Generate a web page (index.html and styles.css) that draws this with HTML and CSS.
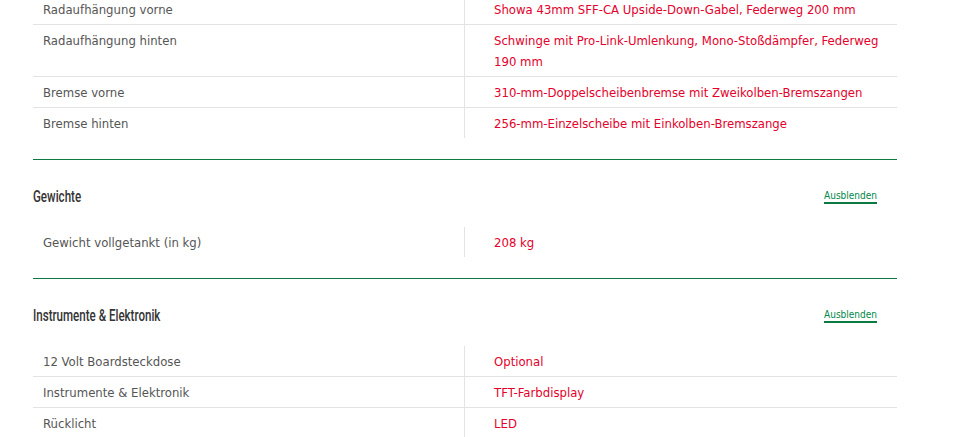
FILE: index.html
```html
<!DOCTYPE html>
<html lang="de">
<head>
<meta charset="utf-8">
<title>Technische Daten</title>
<link rel="stylesheet" href="styles.css">
</head>
<body>
<div class="page">
  <div class="spec-table first">
    <div class="row"><div class="label">Radaufhängung vorne</div><div class="value">Showa 43mm SFF-CA Upside-Down-Gabel, Federweg 200 mm</div></div>
    <div class="row"><div class="label">Radaufhängung hinten</div><div class="value">Schwinge mit Pro-Link-Umlenkung, Mono-Stoßdämpfer, Federweg 190 mm</div></div>
    <div class="row"><div class="label">Bremse vorne</div><div class="value">310-mm-Doppelscheibenbremse mit Zweikolben-Bremszangen</div></div>
    <div class="row"><div class="label">Bremse hinten</div><div class="value">256-mm-Einzelscheibe mit Einkolben-Bremszange</div></div>
  </div>

  <section class="section">
    <div class="section-head">
      <h2 class="section-title">Gewichte</h2>
      <a class="toggle" href="#">Ausblenden</a>
    </div>
    <div class="spec-table">
      <div class="row"><div class="label">Gewicht vollgetankt (in kg)</div><div class="value">208 kg</div></div>
    </div>
  </section>

  <section class="section">
    <div class="section-head">
      <h2 class="section-title">Instrumente &amp; Elektronik</h2>
      <a class="toggle" href="#">Ausblenden</a>
    </div>
    <div class="spec-table">
      <div class="row"><div class="label">12 Volt Boardsteckdose</div><div class="value">Optional</div></div>
      <div class="row"><div class="label">Instrumente &amp; Elektronik</div><div class="value">TFT-Farbdisplay</div></div>
      <div class="row"><div class="label">Rücklicht</div><div class="value">LED</div></div>
    </div>
  </section>
</div>
</body>
</html>
```

FILE: styles.css
```css
html, body {
  margin: 0;
  padding: 0;
  background: #ffffff;
}

.page {
  width: 864px;
  margin-left: 33px;
  font-family: "DejaVu Sans Condensed", "DejaVu Sans", sans-serif;
  font-size: 13px;
}

.spec-table {
  display: flex;
  flex-direction: column;
}

.spec-table.first {
  margin-top: -6px;
}

.row {
  display: grid;
  grid-template-columns: 431px 1fr;
  border-bottom: 1px solid #e3e3e3;
}

.row:last-child {
  border-bottom: none;
}

.label {
  padding: 5px 10px 4px 10px;
  line-height: 21px;
  color: #555555;
}

.value {
  padding: 5px 0 4px 29px;
  line-height: 21px;
  color: #e4002b;
  border-left: 1px solid #e3e3e3;
}

.section {
  margin-top: 21px;
  border-top: 1px solid #0a7a40;
}

.section-head {
  display: flex;
  align-items: center;
  justify-content: space-between;
  padding-top: 27px;
  margin-bottom: 22px;
  height: 18px;
}

.section-title {
  margin: 0;
  font-family: Roboto, "Liberation Sans", sans-serif;
  font-weight: 500;
  font-size: 17px;
  line-height: 18px;
  color: #333333;
  transform: scaleX(0.68);
  transform-origin: left center;
}

.toggle {
  margin-right: 20px;
  font-size: 10px;
  line-height: 13px;
  color: #00884a;
  text-decoration: none;
  border-bottom: 2px solid #0a7a40;
}
```
